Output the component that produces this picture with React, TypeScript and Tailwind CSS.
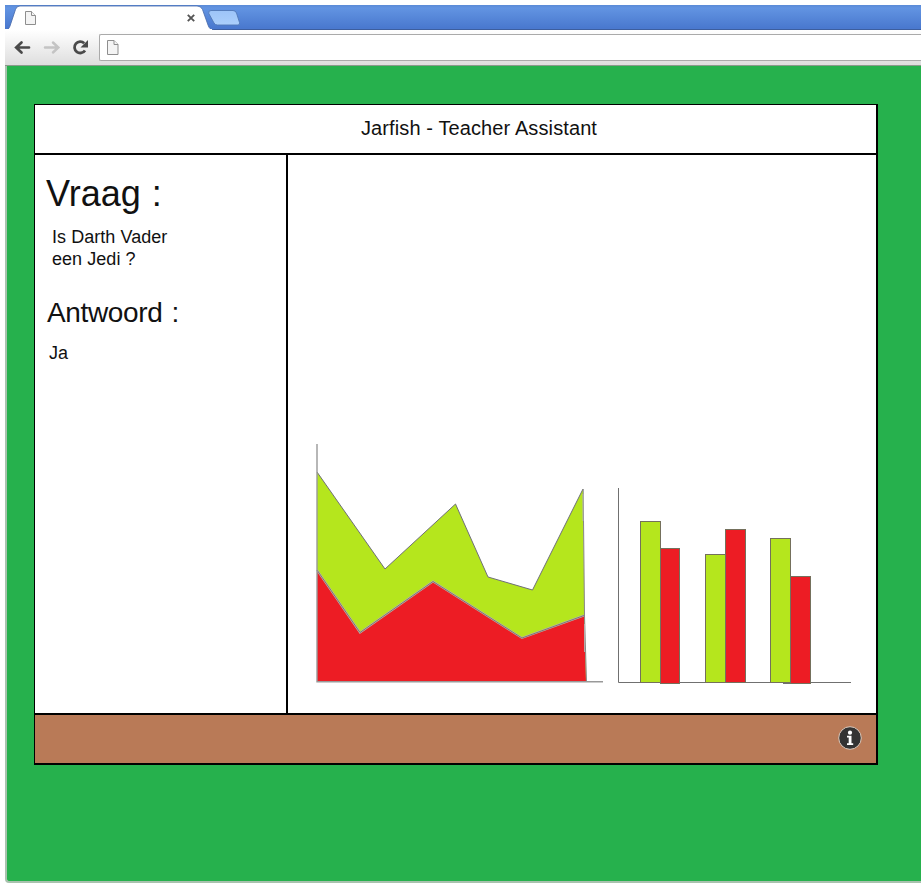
import React from "react";

function PageIcon({ className }: { className: string }) {
  return (
    <svg viewBox="0 0 12 15" className={className} fill="#f4f4f4" stroke="#8e8e8e" strokeWidth="1">
      <path d="M.5 .5H7L11 4.500V14.500H.5Z" />
      <path d="M7 .5V4.500H11" />
    </svg>
  );
}

function TabStrip() {
  return (
    <svg viewBox="0 0 916 25" className="block h-[25px] w-[916px]">
      <defs>
        <linearGradient id="strip" x1="0" y1="0" x2="0" y2="1">
          <stop offset="0" stopColor="#5a8ad6" />
          <stop offset=".12" stopColor="#6294e2" />
          <stop offset=".9" stopColor="#4a79cf" />
          <stop offset="1" stopColor="#4a79cf" />
        </linearGradient>
        <linearGradient id="newtab" x1="0" y1="0" x2="0" y2="1">
          <stop offset="0" stopColor="#9dc4f8" />
          <stop offset="1" stopColor="#abcffb" />
        </linearGradient>
      </defs>
      <rect width="916" height="25" fill="url(#strip)" />
      <rect y="24" width="916" height="1" fill="#3d5e9e" />
      <path d="M0 25C3 25 4 23.500 5 21L10.500 4.500Q11.500 1 15 1H192Q196 1 197.500 4.500L203 20Q204.500 25 209 25Z" fill="#fff" stroke="#4668a8" strokeWidth=".8" />
      <rect y="24" width="207" height="1" fill="#fff" />
      <path d="M206 5.500H228Q230.500 5.500 231.500 8L234.500 17.500Q235 20 233 20H212.500Q210 20 209 18L203.800 8.500Q203 5.500 206 5.500Z" fill="url(#newtab)" stroke="#5077b5" strokeWidth=".9" />
      <path d="M182.800 9.800L189.200 16.200M189.200 9.800L182.800 16.200" stroke="#555" strokeWidth="1.900" />
      <g fill="#f4f4f4" stroke="#8e8e8e">
        <path d="M20.500 6.500H26.500L30.500 10.500V19.500H20.500Z" />
        <path d="M26.500 6.500V10.500H30.500" />
      </g>
    </svg>
  );
}

function Toolbar() {
  return (
    <div className="flex h-[36px] border-b border-[#8b9a8c] bg-linear-to-b from-white to-[#dedede]">
      <svg viewBox="0 0 94 35" className="h-[35px] w-[94px] shrink-0" fill="none">
        <path d="M24 17.500H12M16.500 12.500L11.200 17.500L16.500 22.500" stroke="#4a4a4a" strokeWidth="2.700" strokeLinecap="round" />
        <path d="M40 17.500H52M48 12.500L53.300 17.500L48 22.500" stroke="#c4c4c4" strokeWidth="2.500" strokeLinecap="round" />
        <path d="M80 20.400A5.700 5.700 0 1 1 79.200 13.200" stroke="#4a4a4a" strokeWidth="2.800" />
        <path d="M83 10V17.500H75.500Z" fill="#4a4a4a" />
      </svg>
      <div className="mt-[4px] flex h-[27px] flex-1 items-center rounded-l-[2px] border border-r-0 border-[#aaa] bg-white pl-[7px]">
        <PageIcon className="h-[15px] w-[12px]" />
      </div>
    </div>
  );
}

function AreaChart() {
  return (
    <svg viewBox="316 440 290 245" className="h-[245px] w-[290px]" fill="none">
      <path d="M317 472L385 569L455.500 504L488 577L532.500 590L583 489L584.500 616L586 682H317Z" fill="#b5e61d" />
      <path d="M317 570L360 632.500L433 581.500L522 638L584 615.500L586 682H317Z" fill="#ed1c24" />
      <path d="M317 472L385 569L455.500 504L488 577L532.500 590L583 489" stroke="#6f6f78" />
      <path d="M317 570L360 632.500L433 581.500L522 638L584 615.500" stroke="#bcb6aa" strokeWidth="2" />
      <path d="M317 570L360 632.500L433 581.500L522 638L584 615.500" stroke="#77706e" strokeWidth=".9" />
      <path d="M583.200 489L584.500 616L586.500 682" stroke="#858585" />
      <path d="M583 494V521M584.600 624V652" stroke="#b4b4b4" />
      <path d="M317 444V681.800H603" stroke="#999" strokeWidth="1.400" />
    </svg>
  );
}

const bars = [
  { x: 640.5, y: 521.5, w: 20, bottom: 682.5, fill: "#b5e61d" },
  { x: 660.5, y: 548.5, w: 19, bottom: 683.5, fill: "#ed1c24" },
  { x: 705.5, y: 554.5, w: 20, bottom: 682.5, fill: "#b5e61d" },
  { x: 725.5, y: 529.5, w: 20, bottom: 682.5, fill: "#ed1c24" },
  { x: 770.5, y: 538.5, w: 20, bottom: 682.5, fill: "#b5e61d" },
  { x: 790.5, y: 576.5, w: 20, bottom: 683.5, fill: "#ed1c24" },
];

function BarChart() {
  return (
    <svg viewBox="617 485 236 200" className="h-[200px] w-[236px]" fill="none">
      <path d="M618.500 488V682.500H851" stroke="#707070" />
      {bars.map((b) => (
        <rect key={b.x} x={b.x} y={b.y} width={b.w} height={b.bottom - b.y} fill={b.fill} stroke="#74705c" />
      ))}
      <path d="M783 683.500H790" stroke="#707070" />
    </svg>
  );
}

function InfoIcon() {
  return (
    <svg viewBox="0 0 24 24" className="h-[24px] w-[24px]">
      <circle cx="12" cy="12" r="11.300" fill="#333" stroke="#dccabd" strokeWidth="1" />
      <circle cx="12" cy="6.700" r="2.100" fill="#fff" />
      <path d="M9 9.800H13.500V17.300H15.200V19H9V17.300H10.700V11.500H9Z" fill="#fff" />
    </svg>
  );
}

export default function App() {
  return (
    <div className="h-[888px] w-[922px] bg-white pt-[5px] pl-[5px] font-['Liberation_Sans',Arial,sans-serif] text-[#111]">
      <div className="flex h-[878px] w-[916px] flex-col">
        <TabStrip />
        <Toolbar />
        <main className="flex-1 rounded-bl-[4px] border-b-2 border-l-2 border-[#a9c2ae] bg-[#26b14d] pt-[38px] pl-[27px]">
          <section className="flex h-[661px] w-[844px] flex-col border-t border-r-2 border-b-2 border-l border-black bg-white">
            <header className="h-[50px] border-b-2 border-black pt-[11px] pl-[326px] text-[20px] leading-[24px] whitespace-nowrap">
              <h1 className="tracking-[0.11px]">Jarfish - Teacher Assistant</h1>
            </header>
            <div className="flex h-[558px] shrink-0">
              <aside className="w-[253px] border-r-2 border-black pt-[19px] pl-[11px]">
                <h2 className="text-[36px] leading-[40px] [word-spacing:1px]">Vraag :</h2>
                <p className="mt-[12px] pl-[6px] text-[18px] leading-[22px] tracking-[0.05px]">
                  Is Darth Vader
                  <br />
                  een Jedi ?
                </p>
                <h2 className="mt-[27px] pl-px text-[28px] leading-[32px] tracking-[-0.35px] [word-spacing:1.5px]">Antwoord :</h2>
                <p className="mt-[13px] pl-[3px] text-[18px] leading-[22px]">Ja</p>
              </aside>
              <div className="flex flex-1 items-end gap-[11px] pb-[28px] pl-[28px]">
                <AreaChart />
                <BarChart />
              </div>
            </div>
            <footer className="flex flex-1 items-center justify-end border-t-2 border-black bg-[#b97a57] pr-[14px] pb-[2px]">
              <InfoIcon />
            </footer>
          </section>
        </main>
      </div>
    </div>
  );
}
